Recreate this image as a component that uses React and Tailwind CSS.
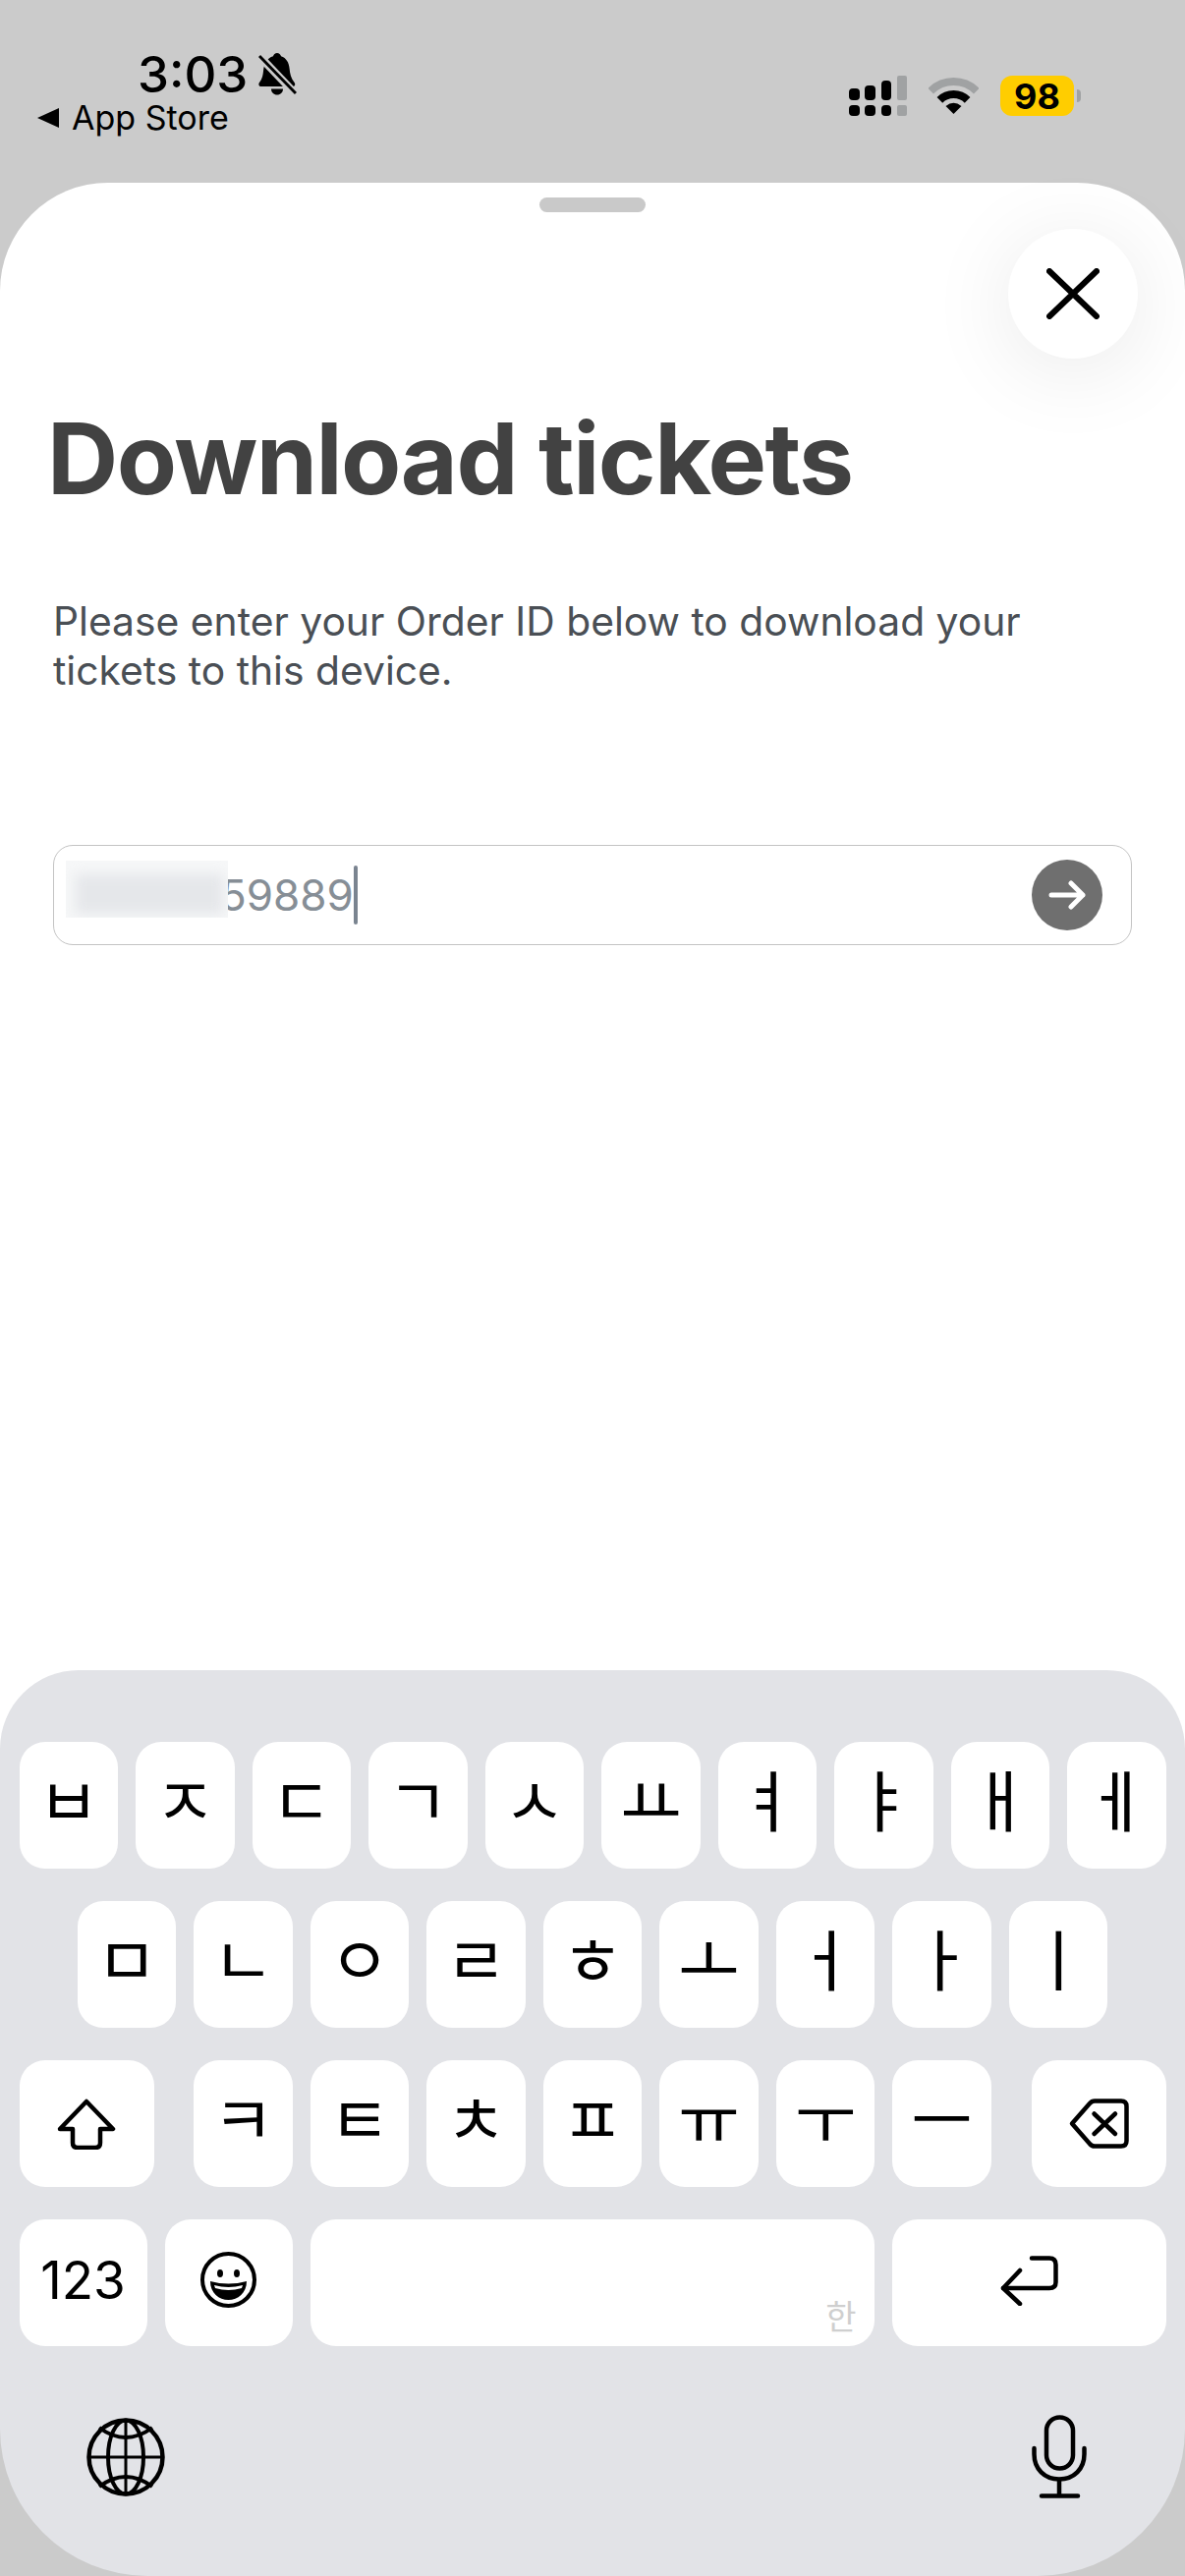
const rowOne = ['ㅂ', 'ㅈ', 'ㄷ', 'ㄱ', 'ㅅ', 'ㅛ', 'ㅕ', 'ㅑ', 'ㅐ', 'ㅔ'];
const rowTwo = ['ㅁ', 'ㄴ', 'ㅇ', 'ㄹ', 'ㅎ', 'ㅗ', 'ㅓ', 'ㅏ', 'ㅣ'];
const rowThree = ['ㅋ', 'ㅌ', 'ㅊ', 'ㅍ', 'ㅠ', 'ㅜ', 'ㅡ'];

function Key({ label }) {
  return (
    <div className="w-[100.5px] h-[129px] shrink-0 bg-white rounded-[26px] flex items-center justify-center pb-[16px] font-['Noto_Sans_CJK_KR',sans-serif] text-[68px] leading-none text-black">
      {label}
    </div>
  );
}

function SignalBars() {
  const tops = ['h-[12px]', 'h-[15px]', 'h-[20px]'];
  return (
    <div className="w-[59px] flex justify-between items-end">
      {tops.map((h, i) => (
        <div key={i} className="w-[10.5px] flex flex-col gap-[5px]">
          <div className={`${h} bg-black rounded-[4px]`} />
          <div className="h-[11px] bg-black rounded-[4px]" />
        </div>
      ))}
      <div className="w-[10px] flex flex-col gap-[5px]">
        <div className="h-[25px] bg-[#a0a2a3] rounded-[2px]" />
        <div className="h-[11px] bg-[#a0a2a3] rounded-[2px]" />
      </div>
    </div>
  );
}

function Wifi() {
  return (
    <svg width="51" height="37" viewBox="0 0 51 37" fill="none">
      <path d="M2.2 13.7A33 33 0 0 1 48.8 13.7" stroke="#a0a2a3" strokeWidth="8" />
      <path d="M11.4 22.9A20 20 0 0 1 39.6 22.9" stroke="#000" strokeWidth="8" />
      <path d="M25.5 37L17.5 29Q25.5 22.5 33.5 29Z" fill="#000" />
    </svg>
  );
}

function MutedBell() {
  return (
    <svg width="39" height="43" viewBox="0 0 39 43" fill="none">
      <path d="M19 0c2 0 3.6 1.4 4 3.2 5.5 1.8 8 6.4 8.6 12.6.4 5 1.6 10 5 14.2 1.4 1.7.4 4-2 4H3c-2.4 0-3.4-2.3-2-4 3.2-4 3.6-8 4-11.500C5.800 10 9 5 15 3.200 15.400 1.400 17 0 19 0Z" fill="#000" />
      <path d="M13 36.500h12c0 3.500-2.600 6-6 6s-6-2.500-6-6Z" fill="#000" />
      <path d="M0 2L38 42" stroke="#cbcbcb" strokeWidth="8" />
      <path d="M1 3L38 41" stroke="#000" strokeWidth="3" />
    </svg>
  );
}

function Globe() {
  return (
    <svg width="80" height="80" viewBox="0 0 80 80" fill="none" stroke="#000">
      <circle cx="40" cy="40" r="37.500" strokeWidth="4.500" />
      <ellipse cx="40" cy="40" rx="18" ry="37.500" strokeWidth="4" />
      <path d="M40 2.500V77.500M2.500 40H77.500" strokeWidth="3" />
      <path d="M13 10Q40 30 67 10M13 70Q40 50 67 70" strokeWidth="4" />
    </svg>
  );
}

function Mic() {
  return (
    <svg width="56" height="85" viewBox="0 0 56 85" fill="none" stroke="#000" strokeWidth="4.500" strokeLinecap="round">
      <rect x="15" y="2.500" width="27" height="52" rx="13.500" />
      <path d="M2.500 34V40C2.500 55 13 65.500 28 65.500S53.500 55 53.500 40V34" />
      <path d="M28 66V82M10 82.500H47" />
    </svg>
  );
}

export default function App() {
  return (
    <div className="w-[1206px] h-[2622px] bg-[#cbcbcb] flex flex-col overflow-hidden font-[Inter]">
      {/* status bar */}
      <div className="h-[186px] shrink-0 flex justify-between">
        <div className="pt-[45px] pl-[38px] flex flex-col">
          <div className="flex items-center gap-[11px] pl-[102px] h-[60px]">
            <span className="text-[51px] leading-none font-medium text-black">3:03</span>
            <MutedBell />
          </div>
          <div className="flex items-center gap-[13px] h-[29px]">
            <div className="w-0 h-0 border-y-[10px] border-y-transparent border-r-[22px] border-r-black" />
            <span className="text-[34px] leading-none text-black">App Store</span>
          </div>
        </div>
        <div className="pt-[77px] pr-[106px] flex items-start gap-[22px]">
          <div className="h-[41px] flex items-end"><SignalBars /></div>
          <div className="pt-[2px]"><Wifi /></div>
          <div className="flex items-center gap-[3px]">
            <div className="w-[75px] h-[41px] bg-[#ffcd00] rounded-[12px] flex items-center justify-center text-[36px] leading-none font-bold text-black">98</div>
            <div className="w-[4px] h-[13px] bg-[#a0a2a3] rounded-r-[4px]" />
          </div>
        </div>
      </div>

      {/* sheet */}
      <div className="relative h-[1594px] shrink-0 bg-white rounded-t-[110px] flex flex-col">
        <div className="mx-auto mt-[15px] w-[108px] h-[15px] bg-[#c9c9c9] rounded-full" />
        <button className="absolute top-[47px] right-[48px] w-[132px] h-[132px] rounded-full bg-white shadow-[0_12px_90px_rgba(0,0,0,0.09)] flex items-center justify-center">
          <svg width="54" height="52" viewBox="0 0 54 52" fill="none" stroke="#000" strokeWidth="6" strokeLinecap="round">
            <path d="M3 3L51 49M51 3L3 49" />
          </svg>
        </button>
        <h1 className="ml-[48px] mt-[191px] text-[100px] leading-[120px] font-bold text-[#424242] tracking-[-1.5px]">Download tickets</h1>
        <p className="ml-[54px] mt-[80px] text-[40.8px] leading-[50px] text-[#4a4f55]">
          Please enter your Order ID below to download your<br />tickets to this device.
        </p>
        <div className="mx-[54px] mt-[153px] h-[102px] border-[1.5px] border-[#c4c4c4] rounded-[20px] flex items-center justify-between pl-[12px] pr-[29px]">
          <div className="flex items-center">
            <div className="relative z-10 w-[165px] h-[58px] -mt-[12px] bg-[#f6f7f8] overflow-hidden shrink-0">
              <div className="w-[150px] h-[40px] ml-[10px] mt-[14px] bg-[#e5e7ea] blur-[6px]" />
            </div>
            <span className="-ml-[8px] text-[44px] leading-none text-[#868e96]">59889</span>
            <div className="w-[4px] h-[60px] bg-[#7a8490] rounded-full" />
          </div>
          <div className="w-[72px] h-[72px] rounded-full bg-[#6f6f6f] flex items-center justify-center">
            <svg width="38" height="30" viewBox="0 0 38 30" fill="none" stroke="#fff" strokeWidth="5" strokeLinecap="round" strokeLinejoin="round">
              <path d="M3 15H35M23 3L35 15L23 27" />
            </svg>
          </div>
        </div>
      </div>

      {/* keyboard */}
      <div className="relative -mt-[80px] h-[922px] shrink-0 bg-[#e2e3e7] rounded-t-[80px] rounded-b-[150px] pt-[73px] px-[19.500px] flex flex-col gap-[33px]">
        <div className="flex justify-between">
          {rowOne.map(k => <Key key={k} label={k} />)}
        </div>
        <div className="flex justify-center gap-[18px]">
          {rowTwo.map(k => <Key key={k} label={k} />)}
        </div>
        <div className="flex justify-between">
          <div className="w-[137px] h-[129px] bg-white rounded-[26px] flex items-center justify-center">
            <svg width="60" height="52" viewBox="0 0 60 52" fill="none" stroke="#000" strokeWidth="4.500" strokeLinejoin="round">
              <path d="M30 3L57 31H44V45Q44 50 39 50H21Q16 50 16 45V31H3Z" />
            </svg>
          </div>
          <div className="flex gap-[18px]">
            {rowThree.map(k => <Key key={k} label={k} />)}
          </div>
          <div className="w-[137px] h-[129px] bg-white rounded-[26px] flex items-center justify-center">
            <svg width="61" height="51" viewBox="0 0 61 51" fill="none" stroke="#000" strokeWidth="4.500" strokeLinecap="round" strokeLinejoin="round">
              <path d="M3 25.500L21 5Q23 2.500 26 2.500H53Q58.500 2.500 58.500 8V43Q58.500 48.500 53 48.500H26Q23 48.500 21 46Z" />
              <path d="M25.500 15.500L47 36M47 15.500L25.500 36" />
            </svg>
          </div>
        </div>
        <div className="flex gap-[18px]">
          <div className="w-[130px] h-[129px] bg-white rounded-[26px] flex items-center justify-center pb-[4px] text-[53px] leading-none text-black">123</div>
          <div className="w-[130px] h-[129px] bg-white rounded-[26px] flex items-center justify-center pb-[6px]">
            <svg width="57" height="57" viewBox="0 0 57 57" fill="none">
              <circle cx="28.500" cy="28.500" r="26.500" stroke="#000" strokeWidth="4" />
              <ellipse cx="20" cy="22" rx="3" ry="4" fill="#000" />
              <ellipse cx="37" cy="22" rx="3" ry="4" fill="#000" />
              <path d="M10 30Q28.500 35 47 30C47 42 38 49 28.500 49S10 42 10 30Z" fill="#000" />
              <path d="M14 34Q28.500 38 43 34L42 37Q28.500 41 15 37Z" fill="#fff" />
            </svg>
          </div>
          <div className="w-[574px] h-[129px] bg-white rounded-[26px] flex items-end justify-end pr-[18px] pb-[14px] font-['Noto_Sans_CJK_KR',sans-serif] text-[34px] leading-none text-[#cfcfcf]">한</div>
          <div className="flex-1 h-[129px] bg-white rounded-[26px] flex items-center justify-center pb-[4px]">
            <svg width="59" height="51" viewBox="0 0 59 51" fill="none" stroke="#000" strokeWidth="4.500" strokeLinecap="round" strokeLinejoin="round">
              <path d="M32 2.500H50Q56.500 2.500 56.500 9V27Q56.500 33 50 33H3" />
              <path d="M20 15L3 33L20 49" />
            </svg>
          </div>
        </div>
        <div className="flex justify-between items-center pl-[68px] pr-[81px] mt-[37px]">
          <Globe />
          <Mic />
        </div>
      </div>
    </div>
  );
}
